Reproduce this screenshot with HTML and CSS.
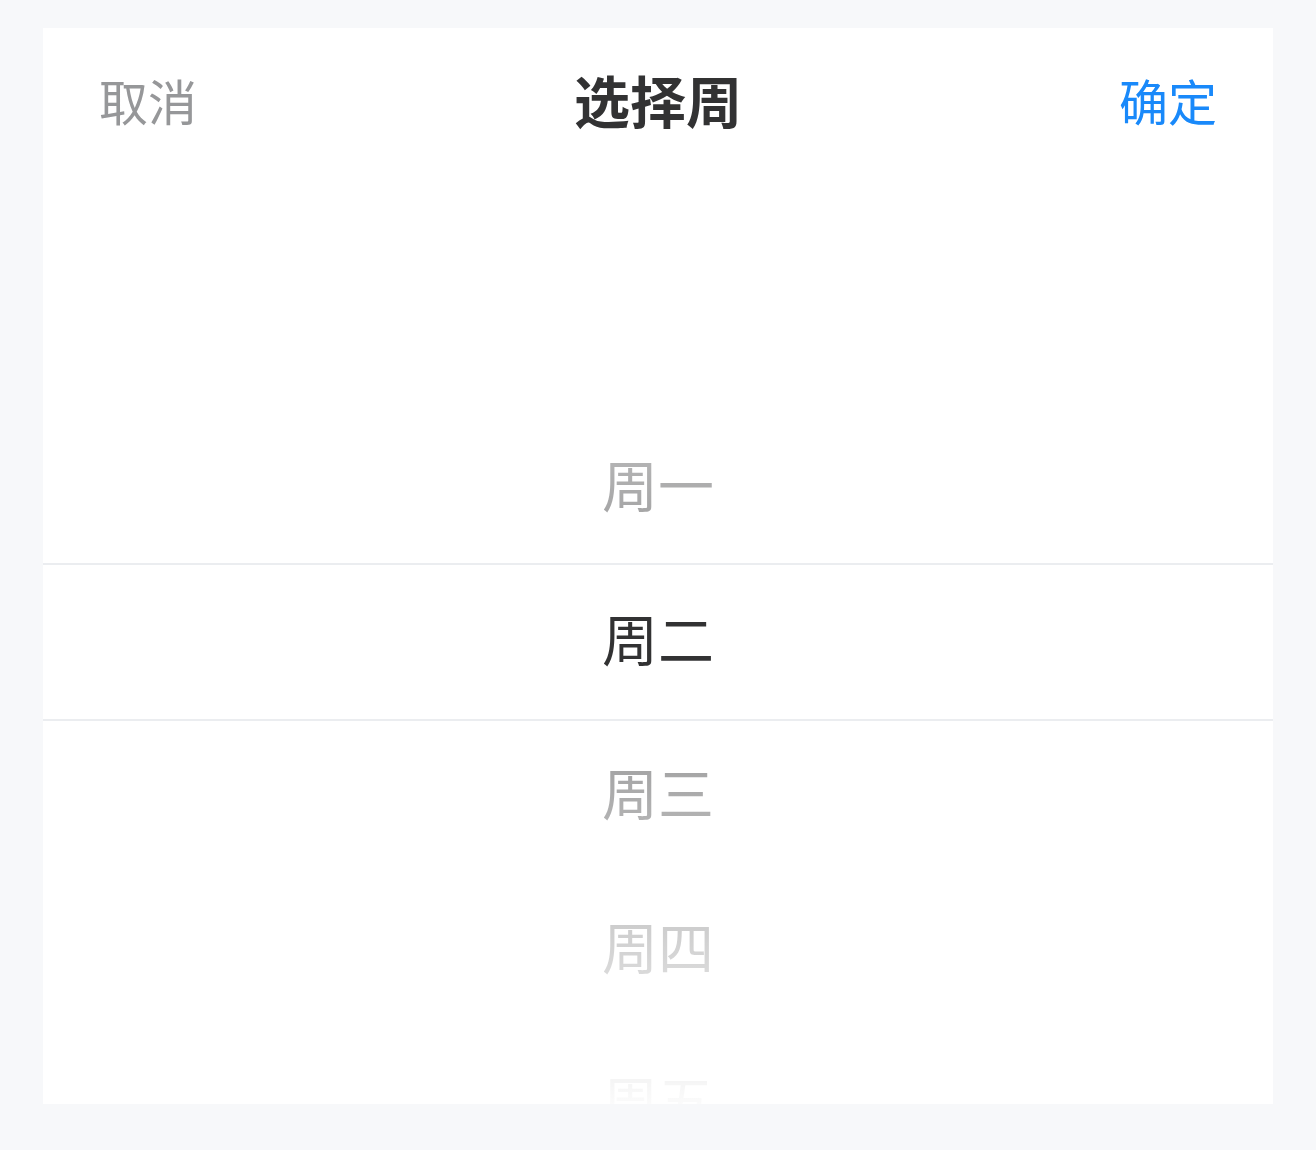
FILE: index.html
```html
<!DOCTYPE html>
<html lang="zh-CN">
<head>
<meta charset="utf-8">
<title>选择周</title>
<link rel="stylesheet" href="styles.css">
</head>
<body>
<div class="picker">
  <div class="toolbar">
    <button class="btn cancel" type="button">取消</button>
    <div class="title">选择周</div>
    <button class="btn confirm" type="button">确定</button>
  </div>
  <div class="columns">
    <ul class="column">
      <li class="item">周一</li>
      <li class="item selected">周二</li>
      <li class="item">周三</li>
      <li class="item">周四</li>
      <li class="item">周五</li>
    </ul>
    <div class="mask"></div>
    <div class="frame"></div>
  </div>
</div>
</body>
</html>
```
FILE: styles.css
```css
html, body {
  margin: 0;
  padding: 0;
}
body {
  background: #f7f8fa;
  padding: 28px 43px 46px;
  font-family: "Noto Sans CJK SC", "Noto Sans", sans-serif;
}
.picker {
  background: #fff;
  height: 1076px;
  overflow: hidden;
  display: flex;
  flex-direction: column;
}
.toolbar {
  height: 154px;
  box-sizing: border-box;
  padding-bottom: 12px;
  display: flex;
  align-items: center;
  justify-content: space-between;
  flex: none;
}
.btn {
  padding: 0 56px;
  background: none;
  border: 0;
  font-family: inherit;
  font-size: 49px;
  line-height: 1;
  cursor: pointer;
}
.cancel { color: #969799; }
.confirm { color: #1989fa; }
.title {
  font-size: 56px;
  font-weight: 700;
  color: #323233;
  line-height: 70px;
}
.columns {
  position: relative;
  flex: 1;
  overflow: hidden;
}
.column {
  list-style: none;
  margin: 0;
  padding: 230px 0 0;
}
.item {
  height: 154px;
  box-sizing: border-box;
  padding-bottom: 13px;
  display: flex;
  align-items: center;
  justify-content: center;
  font-size: 56px;
  color: #323233;
}
.mask {
  position: absolute;
  inset: 0;
  background-image:
    linear-gradient(180deg, rgba(255,255,255,0.98), rgba(255,255,255,0.5)),
    linear-gradient(0deg, rgba(255,255,255,0.98), rgba(255,255,255,0.5));
  background-repeat: no-repeat;
  background-position: top, bottom;
  background-size: 100% 383px;
  pointer-events: none;
}
.frame {
  position: absolute;
  left: 0;
  right: 0;
  top: 381px;
  height: 158px;
  border-top: 2px solid #ebedf0;
  border-bottom: 2px solid #ebedf0;
  box-sizing: border-box;
  pointer-events: none;
}
```
